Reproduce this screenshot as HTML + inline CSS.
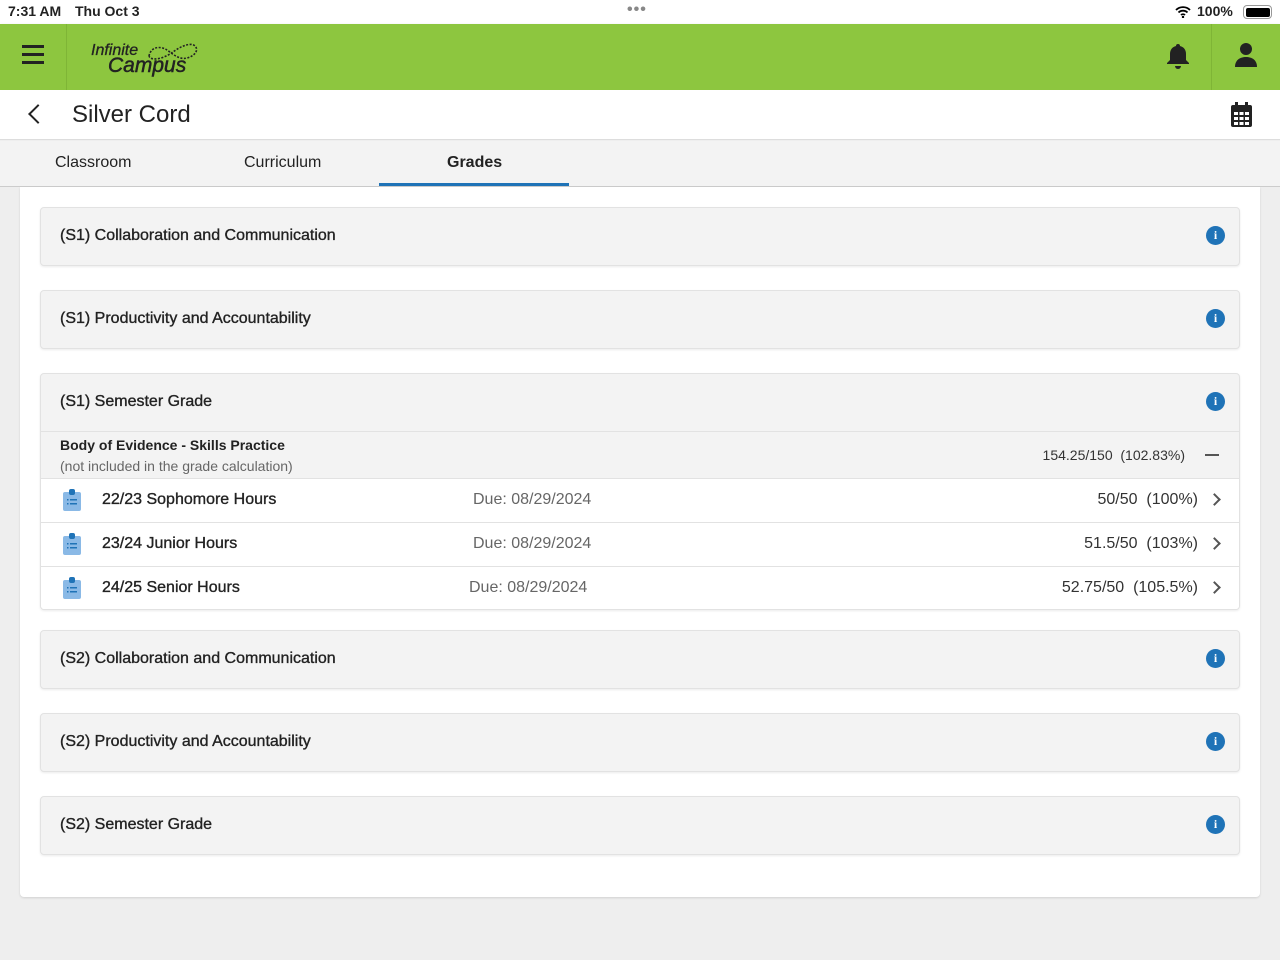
<!DOCTYPE html>
<html><head><meta charset="utf-8"><style>
*{box-sizing:border-box;margin:0;padding:0}
body{width:1280px;height:960px;background:#eeeeee;font-family:"Liberation Sans",Arial,sans-serif;color:#222;position:relative;overflow:hidden}
.abs{position:absolute}
.status{top:0;left:0;width:1280px;height:24px;background:#fff;font-size:14px;font-weight:bold}
.nav{top:24px;left:0;width:1280px;height:66px;background:#8dc63f;box-shadow:0 2px 4px rgba(0,0,0,.2)}
.title{top:90px;left:0;width:1280px;height:50px;background:#fff;border-bottom:1px solid #ddd}
.tabs{top:141px;left:0;width:1280px;height:46px;background:#f3f3f3;border-bottom:1px solid #ccc;font-size:16px}
.card{top:187px;left:20px;width:1240px;height:710px;background:#fff;border-radius:0 0 4px 4px;box-shadow:0 1px 2px rgba(0,0,0,.12)}
.sec{position:absolute;left:40px;width:1200px;background:#f3f3f3;border:1px solid #e2e2e2;border-radius:4px;box-shadow:0 1px 2px rgba(0,0,0,.08)}
.hd{height:57px;position:relative;font-size:16px;color:#222;-webkit-text-stroke:0.35px #222}
.hd span{position:absolute;left:19px;top:19px}
.info{position:absolute;right:14px;top:18px;width:19px;height:19px;border-radius:50%;background:#1f73b7;color:#fff;font:bold 12px "Liberation Serif",serif;text-align:center;line-height:19px;-webkit-text-stroke:0}
.row{position:relative;height:44px;background:#fff;border-top:1px solid #e2e2e2;font-size:16px}
.row .n{position:absolute;left:61px;top:12px;color:#222;-webkit-text-stroke:0.35px #222}
.row .d{position:absolute;top:12px;color:#666}
.row .s{position:absolute;right:41px;top:12px;color:#333}
.row .c{position:absolute;right:20px;top:16px;width:9px;height:9px;border-right:2px solid #555;border-top:2px solid #555;transform:rotate(45deg)}
.clip{position:absolute;left:22px;top:10px}
</style></head><body>
<div class="abs status"><span class="abs" style="left:8px;top:3px">7:31 AM</span><span class="abs" style="left:75px;top:3px">Thu Oct 3</span>
<span class="abs" style="left:627px;top:1px;letter-spacing:1px;color:#888;font-size:16px">•••</span>
<svg class="abs" style="left:1175px;top:6px" width="16" height="12" viewBox="0 0 16 12"><path d="M1 4a10 10 0 0 1 14 0M3.5 6.5a6.5 6.5 0 0 1 9 0M6 9a3 3 0 0 1 4 0" stroke="#000" stroke-width="1.8" fill="none"/><circle cx="8" cy="11" r="1.2"/></svg>
<span class="abs" style="left:1197px;top:3px">100%</span>
<div class="abs" style="left:1243px;top:5px;width:29px;height:14px;border:1.5px solid #999;border-radius:4px;padding:1.5px"><div style="background:#000;width:100%;height:100%;border-radius:2px"></div></div>
</div>
<div class="abs nav">
<div class="abs" style="left:22px;top:21px;width:22px;height:3px;background:#222;box-shadow:0 8px 0 #222,0 16px 0 #222"></div>
<div class="abs" style="left:66px;top:0;width:1px;height:66px;background:#7fb536"></div>
<div class="abs" style="left:1211px;top:0;width:1px;height:66px;background:#7fb536"></div>
<span class="abs" style="left:91px;top:18px;font-style:italic;font-size:16px;color:#222;-webkit-text-stroke:0.3px #222">Infinite</span>
<span class="abs" style="left:108px;top:30px;font-style:italic;font-size:21px;color:#222;-webkit-text-stroke:0.5px #222">Campus</span>
<svg class="abs" style="left:145px;top:12px" width="56" height="28" viewBox="0 0 56 28"><path d="M4 20c2-10 12-10 18-6s12 10 20 8 12-8 8-12-14 0-22 6S6 26 4 20" stroke="#222" stroke-width="1.6" stroke-dasharray="2 1.5" fill="none"/></svg>
<svg class="abs" style="left:1166px;top:19px" width="24" height="26" viewBox="0 0 24 26"><path d="M12 1a2 2 0 0 1 2 2c4 1 6 4 6 8v6l3 3v1H1v-1l3-3v-6c0-4 2-7 6-8a2 2 0 0 1 2-2z" fill="#222"/><path d="M9 23h6a3 3 0 0 1-6 0z" fill="#222"/></svg>
<svg class="abs" style="left:1234px;top:18px" width="24" height="26" viewBox="0 0 24 26"><circle cx="12" cy="7" r="6" fill="#222"/><path d="M1 25c0-7 5-10 11-10s11 3 11 10z" fill="#222"/></svg>
</div>
<div class="abs title">
<div class="abs" style="left:31px;top:17px;width:14px;height:14px;border-left:2.5px solid #222;border-bottom:2.5px solid #222;transform:rotate(45deg)"></div>
<span class="abs" style="left:72px;top:11px;font-size:24px;color:#222">Silver Cord</span>
<svg class="abs" style="left:1230px;top:12px" width="23" height="26" viewBox="0 0 23 26"><rect x="5" y="0" width="3" height="5" fill="#222"/><rect x="15" y="0" width="3" height="5" fill="#222"/><rect x="1" y="3" width="21" height="22" rx="2" fill="#222"/><g fill="#fff"><rect x="4" y="10" width="4" height="3"/><rect x="9.5" y="10" width="4" height="3"/><rect x="15" y="10" width="4" height="3"/><rect x="4" y="15" width="4" height="3"/><rect x="9.5" y="15" width="4" height="3"/><rect x="15" y="15" width="4" height="3"/><rect x="4" y="20" width="4" height="3"/><rect x="9.5" y="20" width="4" height="3"/><rect x="15" y="20" width="4" height="3"/></g></svg>
</div>
<div class="abs tabs">
<span class="abs" style="left:55px;top:13px">Classroom</span>
<span class="abs" style="left:244px;top:13px">Curriculum</span>
<span class="abs" style="left:447px;top:13px;font-weight:bold">Grades</span>
<div class="abs" style="left:379px;top:42px;width:190px;height:3px;background:#1f73b7"></div>
</div>
<div class="abs card"></div>

<div class="sec" style="top:207px"><div class="hd"><span>(S1) Collaboration and Communication</span><div class="info">i</div></div></div>
<div class="sec" style="top:290px"><div class="hd"><span>(S1) Productivity and Accountability</span><div class="info">i</div></div></div>
<div class="sec" style="top:373px;height:237px;overflow:hidden">
<div class="hd"><span>(S1) Semester Grade</span><div class="info">i</div></div>
<div style="position:relative;height:47px;border-top:1px solid #e2e2e2">
<span class="abs" style="left:19px;top:5px;font-size:14px;font-weight:bold">Body of Evidence - Skills Practice</span>
<span class="abs" style="left:19px;top:26px;font-size:14px;color:#666">(not included in the grade calculation)</span>
<span class="abs" style="right:54px;top:15px;font-size:14px;color:#333">154.25/150&nbsp;&nbsp;(102.83%)</span>
<div class="abs" style="right:20px;top:22px;width:14px;height:2px;background:#555"></div>
</div>
<div class="row"><svg class="clip" width="18" height="22" viewBox="0 0 18 22"><rect x="0" y="3" width="18" height="19" rx="2" fill="#8ab9e6"/><rect x="6" y="0" width="6" height="6" rx="2" fill="#1f73b7"/><g fill="#1f73b7"><rect x="4" y="10" width="1.5" height="1.5"/><rect x="7" y="10" width="7" height="1.5"/><rect x="4" y="14" width="1.5" height="1.5"/><rect x="7" y="14" width="7" height="1.5"/></g></svg><span class="n">22/23 Sophomore Hours</span><span class="d" style="left:432px">Due: 08/29/2024</span><span class="s">50/50&nbsp;&nbsp;(100%)</span><div class="c"></div></div>
<div class="row"><svg class="clip" width="18" height="22" viewBox="0 0 18 22"><rect x="0" y="3" width="18" height="19" rx="2" fill="#8ab9e6"/><rect x="6" y="0" width="6" height="6" rx="2" fill="#1f73b7"/><g fill="#1f73b7"><rect x="4" y="10" width="1.5" height="1.5"/><rect x="7" y="10" width="7" height="1.5"/><rect x="4" y="14" width="1.5" height="1.5"/><rect x="7" y="14" width="7" height="1.5"/></g></svg><span class="n">23/24 Junior Hours</span><span class="d" style="left:432px">Due: 08/29/2024</span><span class="s">51.5/50&nbsp;&nbsp;(103%)</span><div class="c"></div></div>
<div class="row"><svg class="clip" width="18" height="22" viewBox="0 0 18 22"><rect x="0" y="3" width="18" height="19" rx="2" fill="#8ab9e6"/><rect x="6" y="0" width="6" height="6" rx="2" fill="#1f73b7"/><g fill="#1f73b7"><rect x="4" y="10" width="1.5" height="1.5"/><rect x="7" y="10" width="7" height="1.5"/><rect x="4" y="14" width="1.5" height="1.5"/><rect x="7" y="14" width="7" height="1.5"/></g></svg><span class="n">24/25 Senior Hours</span><span class="d" style="left:428px">Due: 08/29/2024</span><span class="s">52.75/50&nbsp;&nbsp;(105.5%)</span><div class="c"></div></div>
</div>
<div class="sec" style="top:630px"><div class="hd"><span>(S2) Collaboration and Communication</span><div class="info">i</div></div></div>
<div class="sec" style="top:713px"><div class="hd"><span>(S2) Productivity and Accountability</span><div class="info">i</div></div></div>
<div class="sec" style="top:796px"><div class="hd"><span>(S2) Semester Grade</span><div class="info">i</div></div></div>
</body></html>
